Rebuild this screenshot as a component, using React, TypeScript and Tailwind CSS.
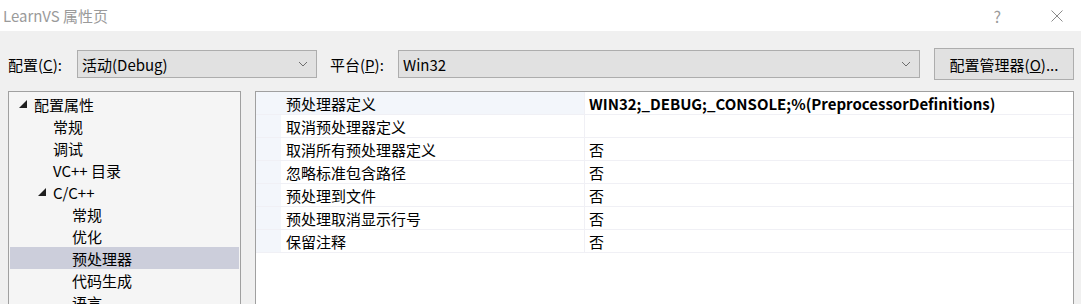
import React from "react"

const tree = [
  { label: "配置属性", level: 0, open: true },
  { label: "常规", level: 1 },
  { label: "调试", level: 1 },
  { label: "VC++ 目录", level: 1 },
  { label: "C/C++", level: 1, open: true },
  { label: "常规", level: 2 },
  { label: "优化", level: 2 },
  { label: "预处理器", level: 2, selected: true },
  { label: "代码生成", level: 2 },
  { label: "语言", level: 2 },
]

const props = [
  { name: "预处理器定义", value: "WIN32;_DEBUG;_CONSOLE;%(PreprocessorDefinitions)", bold: true, active: true },
  { name: "取消预处理器定义", value: "" },
  { name: "取消所有预处理器定义", value: "否" },
  { name: "忽略标准包含路径", value: "否" },
  { name: "预处理到文件", value: "否" },
  { name: "预处理取消显示行号", value: "否" },
  { name: "保留注释", value: "否" },
]

function Chevron() {
  return (
    <svg width="10" height="6" viewBox="0 0 10 6" className="shrink-0">
      <polyline points="1,1 5,5 9,1" fill="none" stroke="#6d6d6d" strokeWidth="1" />
    </svg>
  )
}

function Expander() {
  return (
    <svg width="8" height="8" viewBox="0 0 8 8" className="shrink-0">
      <polygon points="8,0 8,8 0,8" fill="#1e1e1e" />
    </svg>
  )
}

export default function App() {
  return (
    <div
      className="w-[1081px] h-[304px] overflow-hidden bg-[#f0f0f0] text-[15px] text-black leading-none"
      style={{ fontFamily: '"Segoe UI", "Noto Sans CJK SC", sans-serif' }}
    >
      {/* title bar */}
      <div className="h-[31px] bg-white flex items-center pl-[3px] pr-[18px] text-[#9a9a9a]">
        <span>LearnVS 属性页</span>
        <span className="ml-auto mr-[50px] text-[16px]">?</span>
        <svg width="12" height="12" viewBox="0 0 12 12">
          <path d="M0.5 0.5 L11.5 11.5 M11.5 0.5 L0.5 11.5" stroke="#8a8a8a" strokeWidth="1" />
        </svg>
      </div>

      {/* config row */}
      <div className="mt-[17px] h-[32px] flex items-center pl-[8px]">
        <span className="w-[69px]">
          配置(<span className="underline">C</span>):
        </span>
        <div className="w-[240px] h-[28px] bg-[#e1e1e1] border border-[#adadad] flex items-center pl-[4px] pr-[8px]">
          <span>活动(Debug)</span>
          <span className="ml-auto"><Chevron /></span>
        </div>
        <span className="ml-[13px] w-[68px]">
          平台(<span className="underline">P</span>):
        </span>
        <div className="w-[522px] h-[28px] bg-[#e1e1e1] border border-[#adadad] flex items-center pl-[4px] pr-[8px]">
          <span>Win32</span>
          <span className="ml-auto"><Chevron /></span>
        </div>
        <div className="ml-[14px] w-[140px] h-[32px] bg-[#e1e1e1] border border-[#adadad] flex items-center justify-center">
          配置管理器(<span className="underline">O</span>)...
        </div>
      </div>

      {/* main area */}
      <div className="mt-[11px] flex pl-[8px] h-[213px]">
        <div className="w-[233px] h-full border-t border-l border-r border-[#a0a0a0] bg-[#f5f5f5] pt-[1px] px-[1px]">
          {tree.map((t, i) => (
            <div
              key={i}
              className={`h-[22px] flex items-center ${t.selected ? "bg-[#cccedb]" : ""}`}
              style={{ paddingLeft: 9 + t.level * 19 }}
            >
              <span className="w-[15px] flex items-center">{t.open ? <Expander /> : null}</span>
              <span className={t.open ? "" : ""}>{t.label}</span>
            </div>
          ))}
        </div>

        <div className="ml-[14px] w-[819px] h-full border-t border-l border-r border-[#a0a0a0] bg-white">
          {props.map((p, i) => (
            <div key={i} className="flex h-[23px] border-b border-[#f0f0f5]">
              <div className="w-[25px] bg-[#f3f6fb]" />
              <div
                className={`w-[304px] flex items-center pl-[5px] border-r border-[#f0f0f5] ${p.active ? "bg-[#f3f6fb]" : ""}`}
              >
                {p.name}
              </div>
              <div className={`flex-1 flex items-center pl-[4px] ${p.bold ? "font-bold" : ""}`}>{p.value}</div>
            </div>
          ))}
        </div>
      </div>
    </div>
  )
}
